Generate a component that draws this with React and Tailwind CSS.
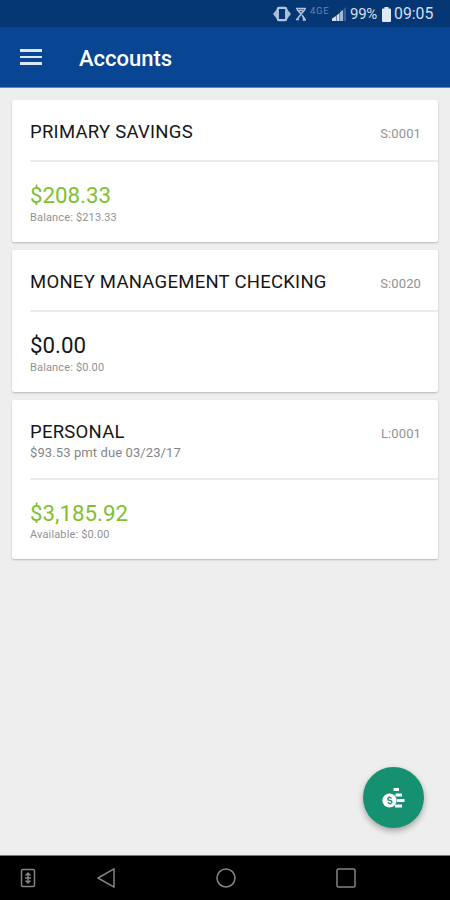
const ACCOUNTS = [
  { name: "PRIMARY SAVINGS", id: "S:0001", amount: "$208.33", detail: "Balance: $213.33", positive: true },
  { name: "MONEY MANAGEMENT CHECKING", id: "S:0020", amount: "$0.00", detail: "Balance: $0.00", positive: false },
  { name: "PERSONAL", id: "L:0001", note: "$93.53 pmt due 03/23/17", amount: "$3,185.92", detail: "Available: $0.00", positive: true },
];

function StatusBar() {
  return (
    <div className="flex h-[27px] items-center bg-[#053774] pl-[273px] pt-px text-[#d5dfee]">
      <svg width="18" height="16" viewBox="0 0 18 16" className="shrink-0">
        <path d="M4 3 0 8 4 13ZM14 3 18 8 14 13Z" fill="#a9bad4" />
        <rect x="4.8" y="1.8" width="8.4" height="12.4" rx="1.2" fill="none" stroke="#b4c3da" strokeWidth="2.2" />
      </svg>
      <svg width="12" height="16" viewBox="0 0 12 16" className="ml-1 shrink-0" fill="none" stroke="#b4c3da" strokeWidth="1.5">
        <path d="M1 2.5H11M2 3.5 6 8 10 3.5M4 4.5H8M6 8 2 13.5M7 9 10 13.5" />
        <path d="M1 13.5H4M8.5 11V14H11" />
      </svg>
      <span className="ml-[3px] w-5 -translate-y-[3px] whitespace-nowrap text-[9.5px] leading-none tracking-[0.7px] text-[#6486b3]">4GE</span>
      <svg width="15" height="15" viewBox="0 0 15 15" className="ml-[2px] shrink-0">
        <path d="M0 14V11.5L4 9V14ZM4.5 14V8.5L7.5 6V14Z" fill="#d5dfee" />
        <path d="M8 14V5L11 3V14Z" fill="#a6b8d3" />
        <path d="M11.5 14V2L14 0V14Z" fill="#37619a" />
      </svg>
      <span className="ml-[3px] w-[28px] whitespace-nowrap text-[15px] leading-none tracking-[-0.3px]">99%</span>
      <svg width="9" height="15" viewBox="0 0 9 15" className="ml-1 shrink-0" fill="#e2e9f3">
        <path d="M2.5 0H6.5V1.5H8Q9 1.5 9 2.5V14Q9 15 8 15H1Q0 15 0 14V2.5Q0 1.5 1 1.5H2.5Z" />
      </svg>
      <span className="ml-[3px] whitespace-nowrap text-[15.8px] leading-none">09:05</span>
    </div>
  );
}

function AccountCard({ account }) {
  return (
    <section className="rounded-[2px] bg-white shadow-[0_1px_2px_rgba(0,0,0,0.24)]">
      <div className={account.note ? "h-[78px] pt-[21px] pl-[18px] pr-[17px]" : "h-[60px] pt-[21px] pl-[18px] pr-[17px]"}>
        <div className="flex items-center justify-between">
          <h2 className="whitespace-nowrap text-[18.5px] leading-[22px] tracking-[0.26px] text-[#161616]">{account.name}</h2>
          <span className="mt-[3px] text-[13px] leading-[19px] tracking-[0.1px] text-[#929292]">{account.id}</span>
        </div>
        {account.note && <p className="text-[13px] leading-[19px] tracking-[0.1px] text-[#858585]">{account.note}</p>}
      </div>
      <div className={account.note ? "ml-[18px] h-[81px] border-t-2 border-[#ebebeb] pt-[19px]" : "ml-[18px] h-[82px] border-t-2 border-[#ebebeb] pt-[19px]"}>
        <p className={account.positive ? "text-[22.3px] leading-[28px] text-[#7fbf32]" : "text-[22.3px] leading-[28px] text-[#161616]"}>{account.amount}</p>
        <p className={account.note ? "text-[11px] leading-[16px] tracking-[0.15px] text-[#929292]" : "text-[11px] leading-[17px] tracking-[0.15px] text-[#929292]"}>{account.detail}</p>
      </div>
    </section>
  );
}

function NavBar() {
  return (
    <nav className="flex h-[45px] items-center border-t border-[#777] bg-black pl-5 text-[#858585]">
      <svg width="16" height="20" viewBox="0 0 16 20" fill="none" stroke="currentColor" strokeWidth="1.5">
        <rect x="1.5" y="1.5" width="13" height="17" rx="1.5" />
        <path d="M8 5V15M5.5 7.5 8 5 10.5 7.5M5.5 12.5 8 15 10.5 12.5M5 10H11" />
      </svg>
      <svg width="20" height="22" viewBox="0 0 20 22" className="ml-[60px]" fill="none" stroke="currentColor" strokeWidth="1.5" strokeLinejoin="round">
        <path d="M18 1.8V20.2L2 11Z" />
      </svg>
      <svg width="22" height="22" viewBox="0 0 22 22" className="ml-[99px]" fill="none" stroke="currentColor" strokeWidth="1.5">
        <circle cx="11" cy="11" r="9" />
      </svg>
      <svg width="22" height="22" viewBox="0 0 22 22" className="ml-[98px]" fill="none" stroke="currentColor" strokeWidth="1.5">
        <rect x="2" y="2" width="18" height="18" rx="1.5" />
      </svg>
    </nav>
  );
}

export default function App() {
  return (
    <div className="relative flex h-[900px] w-[450px] flex-col overflow-hidden bg-[#eeeeee] font-['Roboto',sans-serif]">
      <StatusBar />
      <header className="flex h-[61px] items-center border-b border-[#6685b4] bg-[#084593] pl-5">
        <button aria-label="Menu" className="flex w-[22px] flex-col gap-1">
          <span className="h-[2.5px] bg-[#dfe6f4]" />
          <span className="h-[2.5px] bg-[#dfe6f4]" />
          <span className="h-[2.5px] bg-[#dfe6f4]" />
        </button>
        <h1 className="ml-[37px] mt-[3px] text-[22px] font-medium leading-7 text-white">Accounts</h1>
      </header>
      <main className="flex flex-1 flex-col gap-2 px-3 pt-3">
        {ACCOUNTS.map((account) => (
          <AccountCard key={account.name} account={account} />
        ))}
      </main>
      <button aria-label="Move money" className="absolute left-[363px] top-[767px] flex size-[61px] items-center justify-center rounded-full bg-[#159070] shadow-[0_3px_6px_rgba(0,0,0,0.32)]">
        <svg width="25" height="25" viewBox="0 0 25 25" fill="white">
          <path d="M12.5 3H18V6H12.5ZM14.5 8.5H21V11.5H14.5ZM16 14H23.5V17H16ZM14 19.5H21V22.5H14Z" />
          <circle cx="8.5" cy="15.5" r="7.1" />
          <text x="8.5" y="19" textAnchor="middle" fontSize="10" fontWeight="700" fill="#159070" transform="rotate(-12 8.5 15.5)">$</text>
        </svg>
      </button>
      <NavBar />
    </div>
  );
}
